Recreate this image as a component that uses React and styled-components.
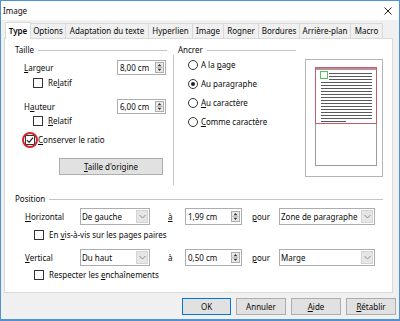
import React from "react";
import styled, { createGlobalStyle } from "styled-components";

const GlobalStyle = createGlobalStyle`
  html, body { margin: 0; padding: 0; background: #ffffff; }
  body {
    font-family: "Noto Sans", "Open Sans", sans-serif;
    font-size: 8px;
    line-height: 12px;
    color: #0a0a0a;
  }
  * { box-sizing: border-box; }
  u { text-underline-offset: 1px; }
`;

const tabs = [
  ["Type", 26],
  ["Options", 35],
  ["Adaptation du texte", 83],
  ["Hyperlien", 44],
  ["Image", 31],
  ["Rogner", 35],
  ["Bordures", 41],
  ["Arrière-plan", 51],
  ["Macro", 32],
];

const Window = styled.div`
  width: 400px;
  height: 321px;
  border: 1px solid #4f93d2;
  border-bottom-width: 2px;
  background: #f0f0f0;
  display: flex;
  flex-direction: column;
`;

const TitleBar = styled.div`
  height: 19px;
  flex: none;
  background: #ffffff;
  display: flex;
  align-items: center;
  justify-content: space-between;
  padding: 0 7px 0 2px;
`;

const Body = styled.div`
  flex: 1;
  display: flex;
  flex-direction: column;
  padding: 3px 3px 0 3px;
`;

const TabBar = styled.div`
  display: flex;
  align-items: flex-end;
  height: 15px;
  margin-left: 1px;
`;

const Tab = styled.div`
  width: ${(p) => p.$w}px;
  height: ${(p) => (p.$active ? 17 : 15)}px;
  display: flex;
  align-items: center;
  justify-content: center;
  border: 1px solid #d9d9d9;
  border-bottom: none;
  border-left-width: ${(p) => (p.$first || p.$active ? 1 : 0)}px;
  background: ${(p) => (p.$active ? "#ffffff" : "#f0f0f0")};
  font-weight: ${(p) => (p.$active ? 600 : 400)};
  white-space: nowrap;
  position: relative;
  top: ${(p) => (p.$active ? 1 : 0)}px;
  z-index: ${(p) => (p.$active ? 1 : 0)};
`;

const Panel = styled.div`
  height: 255px;
  margin-right: 3px;
  background: #ffffff;
  border: 1px solid #d9d9d9;
  padding: 5px 9px 0 10px;
  display: flex;
  flex-direction: column;
`;

const TopSection = styled.div`
  display: flex;
  height: 149px;
`;

const Column = styled.div`
  width: ${(p) => p.$w}px;
  margin-left: ${(p) => p.$ml || 0}px;
  display: flex;
  flex-direction: column;
`;

const GroupHeader = styled.div`
  display: flex;
  align-items: center;
  gap: 4px;
  height: 12px;
  &::after {
    content: "";
    flex: 1;
    height: 1px;
    background: #c4c4c4;
  }
`;

const VDivider = styled.div`
  width: 1px;
  height: 130px;
  margin: 11px 0 0 6px;
  background: #c4c4c4;
`;

const Row = styled.div`
  display: flex;
  align-items: center;
  height: ${(p) => p.$h || 12}px;
  margin-top: ${(p) => p.$mt || 0}px;
  padding-left: ${(p) => p.$indent || 0}px;
  gap: ${(p) => p.$gap || 0}px;
  white-space: nowrap;
`;

const Grow = styled.span`
  flex: 1;
`;

const Cell = styled.span`
  width: ${(p) => p.$w}px;
  padding-left: ${(p) => p.$pl || 0}px;
  flex: none;
`;

const SpinBox = styled.div`
  width: ${(p) => p.$w}px;
  height: ${(p) => p.$h || 15}px;
  margin-right: ${(p) => p.$mr || 0}px;
  flex: none;
  border: 1px solid #abadb3;
  background: #ffffff;
  display: flex;
  align-items: center;
  justify-content: space-between;
  padding: 0 1px 0 2px;
`;

const Select = styled.div`
  width: ${(p) => p.$w}px;
  height: 17px;
  flex: none;
  border: 1px solid #abadb3;
  background: #ffffff;
  display: flex;
  align-items: stretch;
  padding-left: 1px;
`;

const SelectText = styled.span`
  flex: 1;
  min-width: 0;
  overflow: hidden;
  display: flex;
  align-items: center;
`;

const SelectArrow = styled.span`
  width: 12px;
  flex: none;
  margin: 1px;
  background: #e6e6e6;
  border: 1px solid #d4d4d4;
  display: flex;
  align-items: center;
  justify-content: center;
`;

const Check = styled.span`
  width: 10px;
  height: 10px;
  flex: none;
  border: 1px solid #333;
  background: #ffffff;
  display: inline-flex;
  align-items: center;
  justify-content: center;
`;

const RatioWrap = styled.span`
  position: relative;
  display: inline-flex;
`;

const RedRing = styled.span`
  position: absolute;
  left: -3px;
  top: -3px;
  width: 16px;
  height: 16px;
  border: 2px solid #d3262c;
  border-radius: 50%;
`;

const Radio = styled.span`
  width: 10px;
  height: 10px;
  flex: none;
  border: 1px solid #333;
  border-radius: 50%;
  background: #ffffff;
  display: inline-flex;
  align-items: center;
  justify-content: center;
  &::after {
    content: "";
    width: 4px;
    height: 4px;
    border-radius: 50%;
    background: ${(p) => (p.$on ? "#222" : "transparent")};
  }
`;

const Button = styled.button`
  width: ${(p) => p.$w}px;
  height: 17px;
  margin-left: ${(p) => p.$ml || 0}px;
  padding: 0;
  font: inherit;
  color: #0a0a0a;
  background: #e1e1e1;
  border: 1px solid ${(p) => (p.$primary ? "#0078d7" : "#adadad")};
`;

const Preview = styled.div`
  width: 78px;
  height: 118px;
  margin: 15px 0 0 9px;
  border: 1px solid #b4b4b4;
  background: #ffffff;
  flex: none;
`;

const PositionSection = styled.div`
  display: flex;
  flex-direction: column;
`;

const ButtonRow = styled.div`
  display: flex;
  justify-content: flex-end;
  gap: 5px;
  padding-top: 5px;
`;

const Spinner = () => (
  <svg width="9" height="11" viewBox="0 0 9 11">
    <rect x="0.5" y="0.5" width="8" height="10" fill="#e9e9e9" stroke="#adadad" />
    <line x1="0.5" y1="5.5" x2="8.5" y2="5.5" stroke="#c4c4c4" />
    <path d="M4.5 2 L6.5 4.2 L2.5 4.2 Z" fill="#333" />
    <path d="M2.5 6.8 L6.5 6.8 L4.5 9 Z" fill="#333" />
  </svg>
);

const Chevron = () => (
  <svg width="7" height="5" viewBox="0 0 7 5">
    <path d="M0.5 1 L3.5 4 L6.5 1" fill="none" stroke="#8a8a8a" strokeWidth="1" />
  </svg>
);

const CheckMark = () => (
  <svg width="8" height="8" viewBox="0 0 8 8">
    <path d="M1 4.2 L3.1 6.3 L7 1.6" fill="none" stroke="#222" strokeWidth="1.2" />
  </svg>
);

const CloseIcon = () => (
  <svg width="8" height="8" viewBox="0 0 8 8">
    <path d="M0.5 0.5 L7.5 7.5 M7.5 0.5 L0.5 7.5" stroke="#222" strokeWidth="1" />
  </svg>
);

const PagePreview = () => {
  const lines = [];
  for (let y = 13; y <= 58; y += 3) {
    lines.push(
      <line key={y} x1={y < 20 ? 23 : 15} y1={y + 0.5} x2="66" y2={y + 0.5} stroke="#5a5a5a" />
    );
  }
  return (
    <svg width="76" height="116" viewBox="0 0 76 116">
      <rect x="9.5" y="7.5" width="61" height="98" fill="#fff" stroke="#9a9a9a" />
      <rect x="9.5" y="7.5" width="61" height="56" fill="none" stroke="#c0606e" />
      <rect x="10" y="8" width="60" height="2" fill="#b89098" />
      <rect x="14.5" y="11.5" width="7" height="7" fill="#fff" stroke="#5cbf5c" />
      {lines}
      <line x1="15" y1="61.5" x2="40" y2="61.5" stroke="#5a5a5a" />
    </svg>
  );
};

const SpinField = ({ value, w, h, mr }) => (
  <SpinBox $w={w} $h={h} $mr={mr}>
    <span>{value}</span>
    <Spinner />
  </SpinBox>
);

const Dropdown = ({ value, w }) => (
  <Select $w={w}>
    <SelectText>{value}</SelectText>
    <SelectArrow>
      <Chevron />
    </SelectArrow>
  </Select>
);

const App = () => {
  return (
    <Window>
      <GlobalStyle />
      <TitleBar>
        <span>Image</span>
        <CloseIcon />
      </TitleBar>
      <Body>
        <TabBar>
          {tabs.map(([name, w], i) => (
            <Tab key={name} $w={w} $first={i === 0} $active={i === 0}>
              {name}
            </Tab>
          ))}
        </TabBar>
        <Panel>
          <TopSection>
            <Column $w={153}>
              <GroupHeader>Taille</GroupHeader>
              <Row $h={15} $mt={4} $indent={9}>
                <Grow>
                  <u>L</u>argeur
                </Grow>
                <SpinField value="8,00 cm" w={49} mr={1} />
              </Row>
              <Row $mt={2} $indent={18} $gap={5}>
                <Check />
                <span>
                  Re<u>l</u>atif
                </span>
              </Row>
              <Row $h={15} $mt={10} $indent={9}>
                <Grow>
                  H<u>a</u>uteur
                </Grow>
                <SpinField value="6,00 cm" w={49} mr={1} />
              </Row>
              <Row $mt={1} $indent={18} $gap={5}>
                <Check />
                <span>
                  <u>R</u>elatif
                </span>
              </Row>
              <Row $mt={7} $indent={10} $gap={3}>
                <RatioWrap>
                  <Check>
                    <CheckMark />
                  </Check>
                  <RedRing />
                </RatioWrap>
                <span>
                  <u>C</u>onserver le ratio
                </span>
              </Row>
              <Row $h={17} $mt={12} $indent={44}>
                <Button $w={104}>
                  <u>T</u>aille d'origine
                </Button>
              </Row>
            </Column>
            <VDivider />
            <Column $w={119} $ml={4}>
              <GroupHeader>Ancrer</GroupHeader>
              <Row $mt={3} $indent={10} $gap={3}>
                <Radio />
                <span>
                  A la <u>p</u>age
                </span>
              </Row>
              <Row $mt={7} $indent={10} $gap={3}>
                <Radio $on />
                <span>Au paragraphe</span>
              </Row>
              <Row $mt={7} $indent={10} $gap={3}>
                <Radio />
                <span>
                  <u>A</u>u caractère
                </span>
              </Row>
              <Row $mt={7} $indent={10} $gap={3}>
                <Radio />
                <span>
                  <u>C</u>omme caractère
                </span>
              </Row>
            </Column>
            <Preview>
              <PagePreview />
            </Preview>
          </TopSection>
          <PositionSection>
            <GroupHeader>Position</GroupHeader>
            <Row $h={17} $mt={3} $indent={10}>
              <Cell $w={55}>
                <u>H</u>orizontal
              </Cell>
              <Dropdown value="De gauche" w={70} />
              <Cell $w={35} $pl={18}>
                <u>à</u>
              </Cell>
              <SpinField value="1,99 cm" w={57} h={17} />
              <Cell $w={37} $pl={10}>
                <u>p</u>our
              </Cell>
              <Dropdown value="Zone de paragraphe" w={96} />
            </Row>
            <Row $mt={4} $indent={19} $gap={5}>
              <Check />
              <span>
                En <u>v</u>is-à-vis sur les pages paires
              </span>
            </Row>
            <Row $h={17} $mt={8} $indent={10}>
              <Cell $w={55}>
                <u>V</u>ertical
              </Cell>
              <Dropdown value="Du haut" w={70} />
              <Cell $w={35} $pl={18}>
                à
              </Cell>
              <SpinField value="0,50 cm" w={57} h={17} />
              <Cell $w={37} $pl={10}>
                <u>p</u>our
              </Cell>
              <Dropdown value="Marge" w={96} />
            </Row>
            <Row $mt={3} $indent={19} $gap={5}>
              <Check />
              <span>
                Respecter les <u>e</u>nchaînements
              </span>
            </Row>
          </PositionSection>
        </Panel>
        <ButtonRow>
          <Button $w={49} $primary>
            OK
          </Button>
          <Button $w={50}>Annuler</Button>
          <Button $w={50}>
            <u>A</u>ide
          </Button>
          <Button $w={50}>
            <u>R</u>établir
          </Button>
        </ButtonRow>
      </Body>
    </Window>
  );
};

export default App;
